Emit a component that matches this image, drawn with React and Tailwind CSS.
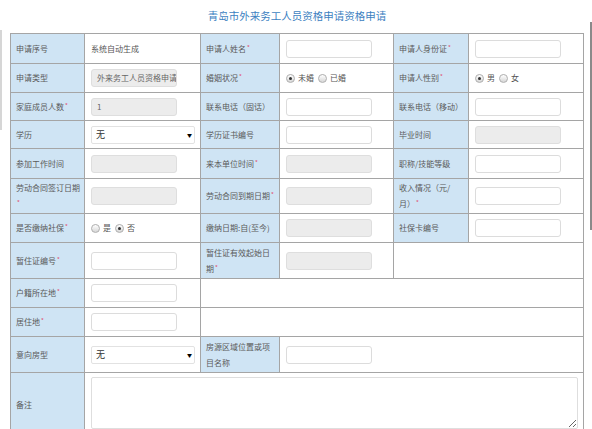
import React from 'react'

const FONT = { fontFamily: '"Noto Sans CJK SC", "Noto Sans", sans-serif' }

function Req() {
  return <span className="ml-[1px] align-[2px] text-[6px] leading-none text-[#e0486a]">*</span>
}

function Label({ children, req, className = '' }) {
  return (
    <td className={`whitespace-nowrap border border-[#a5a5a5] bg-[#cfe4f4] pl-[5px] pr-[2px] text-[8px] leading-[16px] text-[#5a5a5a] ${className}`}>
      {children}
      {req && <Req />}
    </td>
  )
}

function Input({ disabled, value, w = 'w-[86px]' }) {
  return (
    <div
      className={`flex h-[18px] ${w} items-center overflow-hidden whitespace-nowrap rounded-[3px] border px-[5px] text-[8px] text-[#666] ${
        disabled ? 'border-[#dedede] bg-[#ececec]' : 'border-[#dcdcdc] bg-white'
      }`}
    >
      {value}
    </div>
  )
}

function Select({ value }) {
  return (
    <div className="flex h-[18px] w-[104px] items-center justify-between rounded-[2px] border border-[#e2e2e2] bg-white pl-[4px] pr-[2px] text-[9px] text-[#333]">
      <span>{value}</span>
      <span className="text-[5px] leading-none text-black">▼</span>
    </div>
  )
}

function Radio({ checked }) {
  return (
    <span className="flex h-[9px] w-[9px] items-center justify-center rounded-full border border-[#b0b0b0] bg-gradient-to-b from-white to-[#d6d6d6]">
      {checked && <span className="h-[3px] w-[3px] rounded-full bg-[#333]" />}
    </span>
  )
}

function RadioGroup({ options, checked }) {
  return (
    <div className="flex items-center text-[8px] text-[#555]">
      {options.map((o, i) => (
        <span key={o} className="mr-[3px] flex items-center gap-[3px]">
          <Radio checked={i === checked} />
          <span className="mr-[1px]">{o}</span>
        </span>
      ))}
    </div>
  )
}

function Cell({ children, colSpan, className = '' }) {
  return (
    <td colSpan={colSpan} className={`border border-[#a5a5a5] bg-white px-[6px] ${className}`}>
      {children}
    </td>
  )
}

export default function App() {
  return (
    <div className="flex h-[429px] w-[592px] overflow-hidden bg-white" style={FONT}>
      <div className="mt-[30px] h-[100px] w-[2px] shrink-0 bg-[#d6d6d6]" />
      <div className="ml-[8px] flex shrink-0 flex-col">
        <h1 className="flex h-[33px] shrink-0 items-center justify-center pb-[1px] text-[10.5px] font-normal text-[#3d7fc1]">
          青岛市外来务工人员资格申请资格申请
        </h1>
        <table className="w-[573px] shrink-0 table-fixed border-collapse">
          <colgroup>
            <col className="w-[74px]" />
            <col className="w-[116px]" />
            <col className="w-[79px]" />
            <col className="w-[114px]" />
            <col className="w-[75px]" />
            <col className="w-[115px]" />
          </colgroup>
          <tbody>
            <tr className="h-[30px]">
              <Label>申请序号</Label>
              <Cell className="text-[8px] text-[#555]">系统自动生成</Cell>
              <Label req>申请人姓名</Label>
              <Cell><Input /></Cell>
              <Label req>申请人身份证</Label>
              <Cell><Input /></Cell>
            </tr>
            <tr className="h-[29px]">
              <Label>申请类型</Label>
              <Cell><Input disabled value="外来务工人员资格申请" /></Cell>
              <Label req>婚姻状况</Label>
              <Cell><RadioGroup options={['未婚', '已婚']} checked={0} /></Cell>
              <Label req>申请人性别</Label>
              <Cell><RadioGroup options={['男', '女']} checked={0} /></Cell>
            </tr>
            <tr className="h-[28px]">
              <Label req>家庭成员人数</Label>
              <Cell><Input disabled value="1" /></Cell>
              <Label>联系电话（固话）</Label>
              <Cell><Input /></Cell>
              <Label>联系电话（移动）</Label>
              <Cell><Input /></Cell>
            </tr>
            <tr className="h-[28px]">
              <Label>学历</Label>
              <Cell><Select value="无" /></Cell>
              <Label>学历证书编号</Label>
              <Cell><Input /></Cell>
              <Label>毕业时间</Label>
              <Cell><Input disabled /></Cell>
            </tr>
            <tr className="h-[30px]">
              <Label>参加工作时间</Label>
              <Cell><Input disabled /></Cell>
              <Label req>来本单位时间</Label>
              <Cell><Input disabled /></Cell>
              <Label>职称/技能等级</Label>
              <Cell><Input /></Cell>
            </tr>
            <tr className="h-[35px]">
              <Label>
                劳动合同签订日期
                <br />
                <Req />
              </Label>
              <Cell><Input disabled /></Cell>
              <Label req>劳动合同到期日期</Label>
              <Cell><Input disabled /></Cell>
              <Label>
                收入情况（元/
                <br />
                月）
                <Req />
              </Label>
              <Cell><Input /></Cell>
            </tr>
            <tr className="h-[29px]">
              <Label req>是否缴纳社保</Label>
              <Cell><RadioGroup options={['是', '否']} checked={1} /></Cell>
              <Label>缴纳日期:自(至今)</Label>
              <Cell><Input disabled /></Cell>
              <Label>社保卡编号</Label>
              <Cell><Input /></Cell>
            </tr>
            <tr className="h-[36px]">
              <Label req>暂住证编号</Label>
              <Cell><Input /></Cell>
              <Label>
                暂住证有效起始日
                <br />
                期
                <Req />
              </Label>
              <Cell><Input disabled /></Cell>
              <Cell colSpan={2} />
            </tr>
            <tr className="h-[29px]">
              <Label req>户籍所在地</Label>
              <Cell><Input /></Cell>
              <Cell colSpan={4} />
            </tr>
            <tr className="h-[29px]">
              <Label req>居住地</Label>
              <Cell><Input /></Cell>
              <Cell colSpan={4} />
            </tr>
            <tr className="h-[36px]">
              <Label>意向房型</Label>
              <Cell><Select value="无" /></Cell>
              <Label>
                房源区域位置或项
                <br />
                目名称
              </Label>
              <Cell colSpan={3}><Input /></Cell>
            </tr>
            <tr className="h-[64px]">
              <Label>备注</Label>
              <Cell colSpan={5} className="align-top pt-[4px]">
                <textarea className="block h-[52px] w-[487px] resize-y rounded-[2px] border border-[#dedede] bg-white" />
              </Cell>
            </tr>
          </tbody>
        </table>
      </div>
      <div className="ml-[6px] mt-[22px] h-[208px] w-[2px] shrink-0 bg-[#8a8a8a]" />
    </div>
  )
}
